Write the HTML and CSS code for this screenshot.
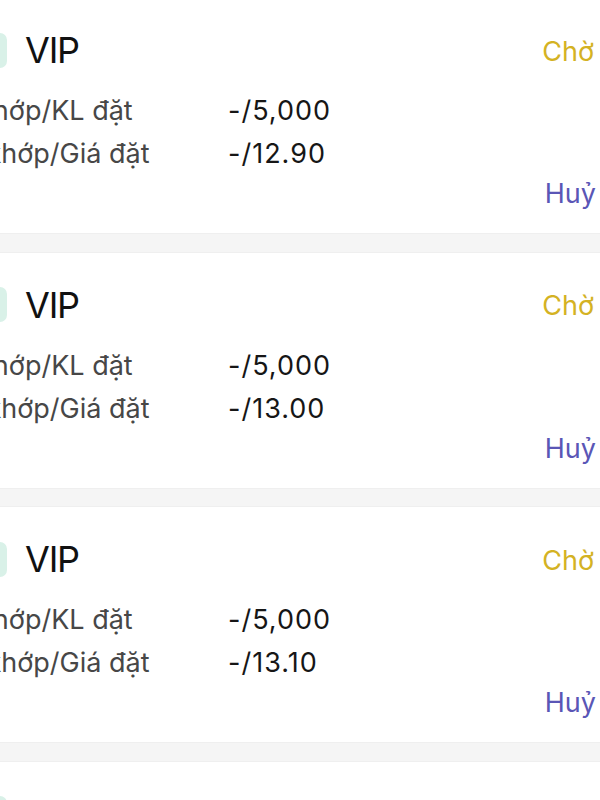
FILE: index.html
```html
<!DOCTYPE html>
<html lang="vi">
<head>
<meta charset="utf-8">
<link rel="stylesheet" href="styles.css">
</head>
<body>
<div class="list">
  <section class="order">
    <div class="head"><span class="badge"></span><span class="name">VIP</span><span class="status">Chờ</span></div>
    <div class="grid">
      <span class="label">KL khớp/KL đặt</span><span class="value">-/5,000</span>
      <span class="label">Giá khớp/Giá đặt</span><span class="value">-/12.90</span>
    </div>
    <div class="actions"><span class="cancel">Huỷ</span></div>
  </section>
  <div class="gap"></div>
  <section class="order">
    <div class="head"><span class="badge"></span><span class="name">VIP</span><span class="status">Chờ</span></div>
    <div class="grid">
      <span class="label">KL khớp/KL đặt</span><span class="value">-/5,000</span>
      <span class="label">Giá khớp/Giá đặt</span><span class="value">-/13.00</span>
    </div>
    <div class="actions"><span class="cancel">Huỷ</span></div>
  </section>
  <div class="gap"></div>
  <section class="order">
    <div class="head"><span class="badge"></span><span class="name">VIP</span><span class="status">Chờ</span></div>
    <div class="grid">
      <span class="label">KL khớp/KL đặt</span><span class="value">-/5,000</span>
      <span class="label">Giá khớp/Giá đặt</span><span class="value">-/13.10</span>
    </div>
    <div class="actions"><span class="cancel">Huỷ</span></div>
  </section>
  <div class="gap"></div>
  <section class="order">
    <div class="head"><span class="badge"></span><span class="name">VIP</span><span class="status">Chờ</span></div>
    <div class="grid">
      <span class="label">KL khớp/KL đặt</span><span class="value">-/5,000</span>
      <span class="label">Giá khớp/Giá đặt</span><span class="value">-/13.20</span>
    </div>
    <div class="actions"><span class="cancel">Huỷ</span></div>
  </section>
</div>
</body>
</html>
```
FILE: styles.css
```css
html, body {
  margin: 0;
  padding: 0;
  background: #ffffff;
  overflow: hidden;
  height: 800px;
}
body {
  font-family: Inter, "Noto Sans", "Liberation Sans", sans-serif;
}
.list {
  margin-top: -2px;
}
.order {
  background: #ffffff;
  padding: 30px 6px 21px 0;
  height: 184px;
}
.head {
  display: flex;
  align-items: center;
  height: 44px;
  margin-left: -29px;
}
.badge {
  width: 36px;
  height: 35px;
  border-radius: 7px;
  background: #d9f1e8;
  flex: none;
}
.name {
  margin-left: 18px;
  font-size: 36px;
  line-height: 44px;
  letter-spacing: -1.2px;
  color: #111111;
}
.status {
  margin-left: auto;
  margin-top: 3px;
  font-size: 27px;
  line-height: 44px;
  color: #d4b223;
}
.grid {
  display: grid;
  grid-template-columns: 291px auto;
  margin-top: 17px;
  margin-left: -63px;
  font-size: 27px;
  line-height: 43px;
}
.label {
  color: #474747;
  white-space: nowrap;
}
.value {
  color: #161616;
  letter-spacing: 1px;
}
.actions {
  display: flex;
  justify-content: flex-end;
}
.cancel {
  font-size: 27px;
  line-height: 37px;
  color: #5a56b6;
  margin-right: -2px;
}
.gap {
  height: 17.5px;
  background: #f5f5f5;
  border-top: 1px solid #efefef;
  border-bottom: 1px solid #efefef;
}
```
